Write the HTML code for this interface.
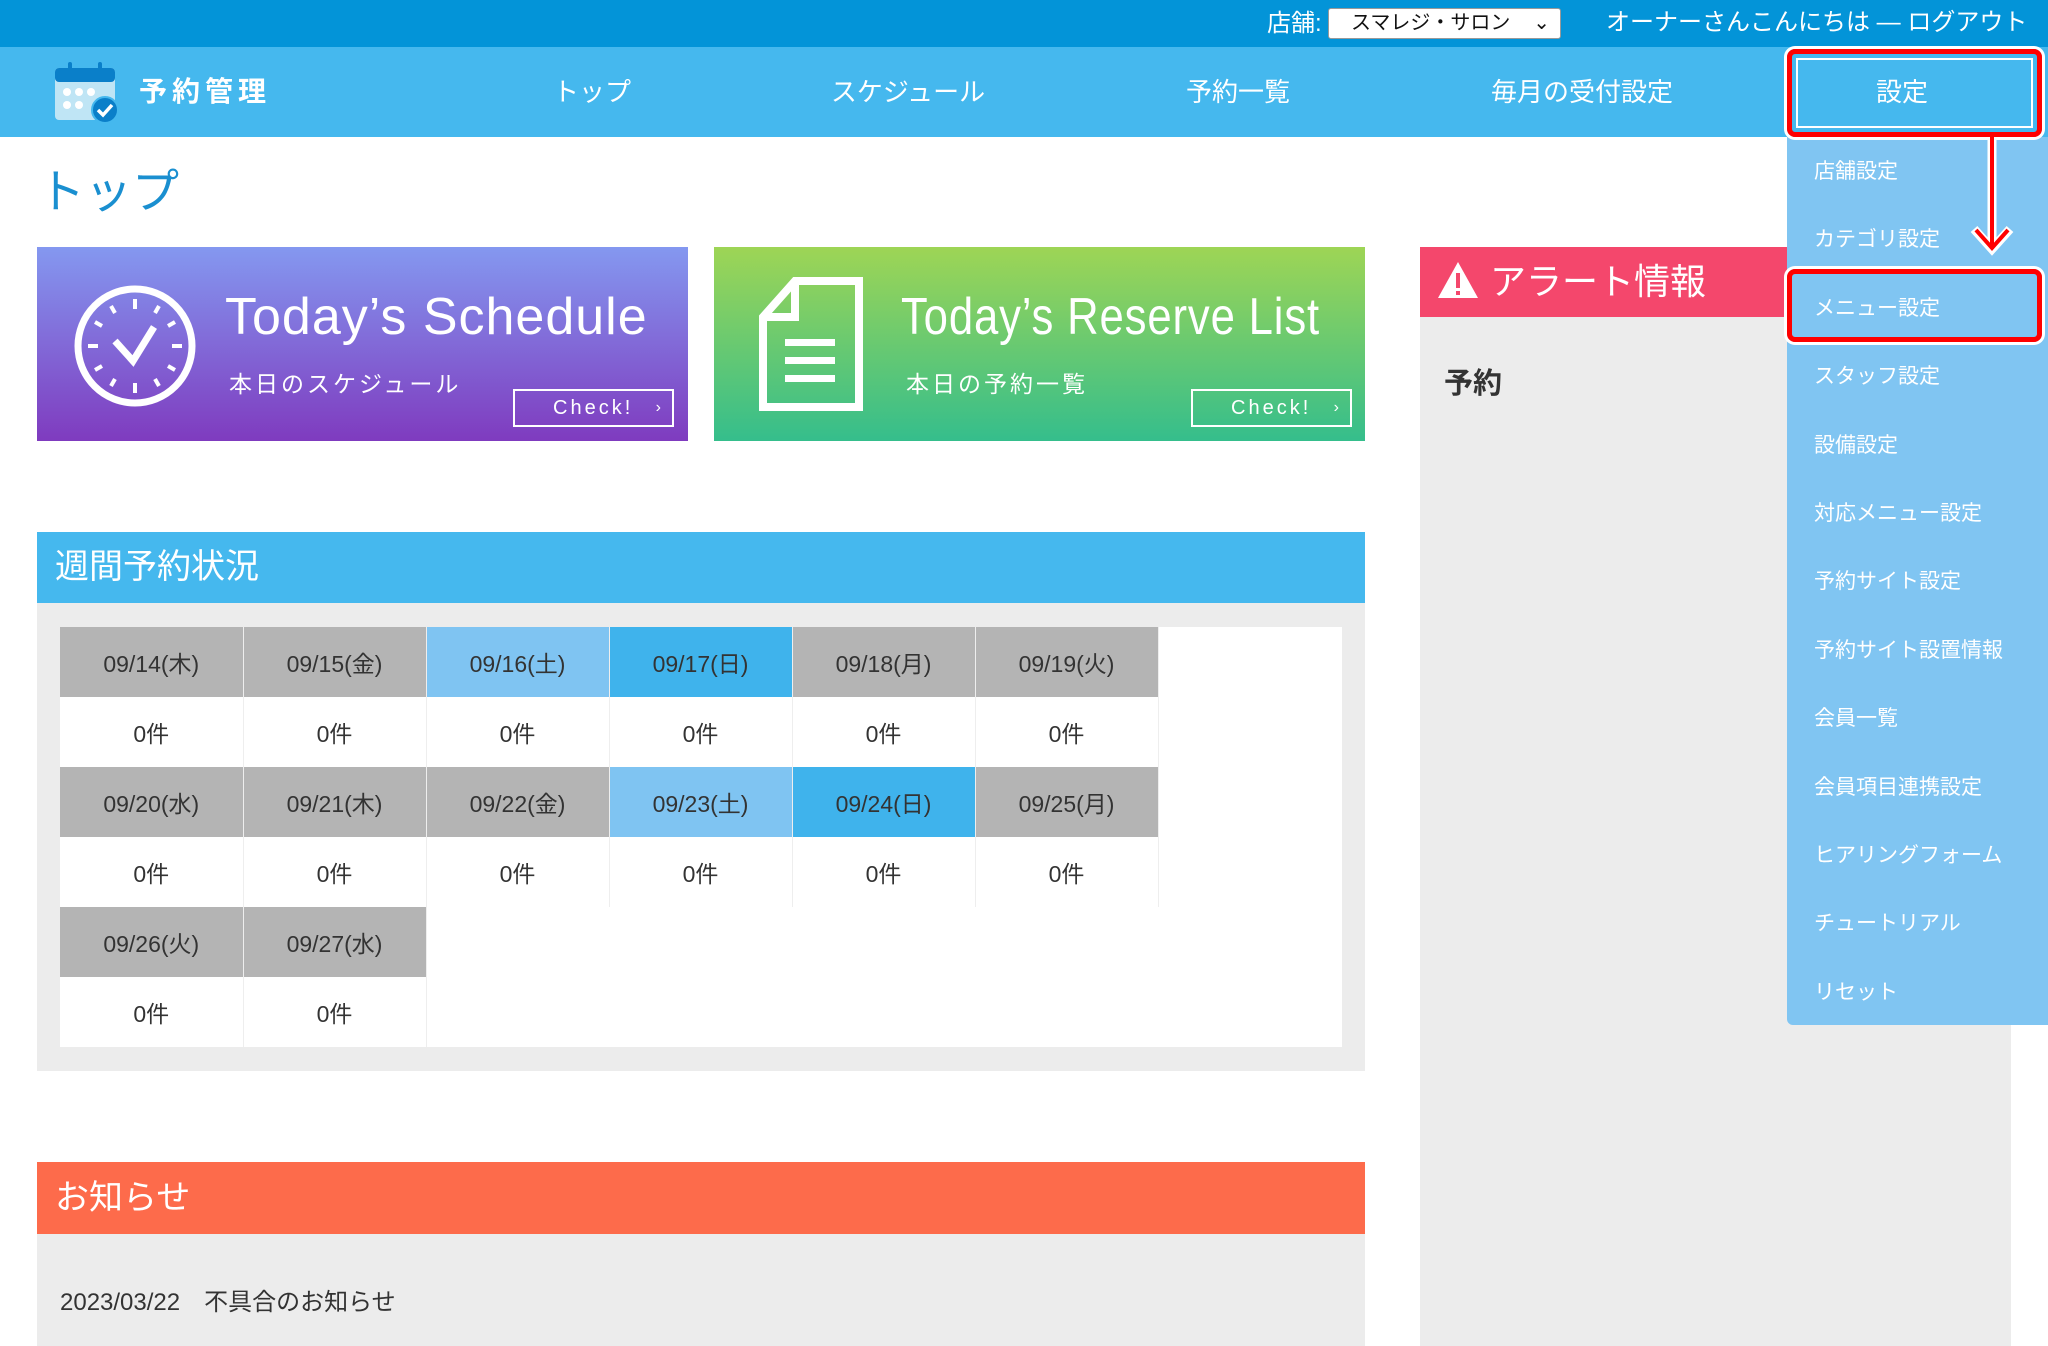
<!DOCTYPE html>
<html><head><meta charset="utf-8"><style>
*{margin:0;padding:0;box-sizing:border-box}
body{width:2048px;height:1346px;overflow:hidden;background:#fff;font-family:"Liberation Sans","Noto Sans CJK JP",sans-serif;position:relative;color:#333}
.abs{position:absolute}
#top{left:0;top:0;width:2048px;height:47px;background:#0394d8}
#nav{left:0;top:47px;width:2048px;height:90px;background:#45b8ee}
.nv{position:absolute;top:47px;height:90px;line-height:90px;color:#fff;font-size:26px;transform:translateX(-50%);white-space:nowrap;z-index:12}
.dd{left:1787px;top:137px;width:261px;height:888px;background:#80c5f2;border-radius:0 0 0 6px;z-index:10}
.di{position:absolute;left:1814px;color:#fff;font-size:21px;white-space:nowrap;transform:translateY(-50%);z-index:11}
.z{z-index:11}
.card{top:247px;width:651px;height:194px;color:#fff;overflow:hidden}
.ttl{position:absolute;font-size:52px;letter-spacing:1px;font-family:"Liberation Sans",sans-serif;white-space:nowrap;transform-origin:left center}
.sub{position:absolute;font-size:23px;letter-spacing:3px;white-space:nowrap}
.chk{position:absolute;width:161px;height:38px;border:2px solid #fff;font-size:20px;letter-spacing:3px;line-height:34px;padding-left:38px}
.chk span{position:absolute;right:8px;font-size:16px}
table{border-collapse:collapse;position:absolute;left:60px;top:627px}
td{width:183px;height:70px;text-align:center;font-size:23px;color:#333;border-right:1px solid #eee}
.h{background:#b4b4b4}.s{background:#7fc4f2}.u{background:#3fb3ec}
</style></head><body>
<div id="top" class="abs"></div>
<div class="abs" style="left:1267px;top:8px;color:#fff;font-size:24px;line-height:31px">店舗:</div>
<div class="abs" style="left:1328px;top:8px;width:233px;height:31px;background:#fff;border:1px solid #999;border-radius:3px;font-size:20px;line-height:29px;padding-left:22px;color:#111">スマレジ・サロン<span style="position:absolute;right:10px;top:0">⌄</span></div>
<div class="abs" style="left:1606px;top:6px;color:#fff;font-size:24px;line-height:33px;white-space:nowrap">オーナーさんこんにちは — ログアウト</div>
<div id="nav" class="abs"></div>
<svg class="abs" style="left:53px;top:60px" width="70" height="64" viewBox="0 0 70 64">
<rect x="2" y="8" width="60" height="52" rx="4" fill="#bfe5f5"/><rect x="2" y="8" width="60" height="14" rx="4" fill="#0a7fc9"/>
<rect x="15" y="2" width="4" height="10" rx="2" fill="#0a7fc9"/><rect x="45" y="2" width="4" height="10" rx="2" fill="#0a7fc9"/>
<circle cx="14" cy="32" r="4" fill="#fff"/><circle cx="26" cy="32" r="4" fill="#fff"/><circle cx="38" cy="32" r="4" fill="#fff"/><circle cx="14" cy="45" r="4" fill="#fff"/><circle cx="26" cy="45" r="4" fill="#fff"/>
<circle cx="52" cy="50" r="13" fill="#0a7fc9" stroke="#45b8ee" stroke-width="2"/><path d="M45 50l5 5 9-10" stroke="#fff" stroke-width="3.5" fill="none"/></svg>
<div class="abs" style="left:139px;top:47px;line-height:90px;color:#fff;font-size:28px;font-weight:bold;letter-spacing:5px">予約管理</div>
<div class="nv" style="left:592px">トップ</div>
<div class="nv" style="left:908px">スケジュール</div>
<div class="nv" style="left:1238px">予約一覧</div>
<div class="nv" style="left:1582px">毎月の受付設定</div>

<div class="abs" style="left:38px;top:162px;font-size:47px;color:#1a8fd0;line-height:60px">トップ</div>

<div class="abs card" style="left:37px;background:linear-gradient(#8498f0,#7f3bbf)">
<svg class="abs" style="left:35px;top:36px" width="126" height="126" viewBox="0 0 126 126"><circle cx="63" cy="63" r="57" fill="none" stroke="#fff" stroke-width="7"/>
<g stroke="#fff" stroke-width="4"><path d="M63 16v10M63 100v10M16 63h10M100 63h10M39 23l4 7M87 23l-4 7M23 39l7 4M103 39l-7 4M23 87l7-4M103 87l-7-4M39 103l4-7M87 103l-4-7"/></g>
<path d="M43 58l18 20 21-34" stroke="#fff" stroke-width="7" fill="none"/></svg>
<div class="ttl" style="left:188px;top:40px">Today’s Schedule</div>
<div class="sub" style="left:192px;top:118px">本日のスケジュール</div>
<div class="chk" style="left:476px;top:142px">Check!<span>›</span></div>
</div>
<div class="abs card" style="left:714px;background:linear-gradient(#9ed555,#35be8c)">
<svg class="abs" style="left:45px;top:30px" width="104" height="134" viewBox="0 0 104 134"><path d="M36 4H100V130H4V40Z" fill="none" stroke="#fff" stroke-width="8"/><path d="M36 4V40H4" fill="none" stroke="#fff" stroke-width="8"/>
<rect x="26" y="62" width="50" height="7" fill="#fff"/><rect x="26" y="80" width="50" height="7" fill="#fff"/><rect x="26" y="98" width="50" height="7" fill="#fff"/></svg>
<div class="ttl" style="left:187px;top:40px;transform:scaleX(0.84)">Today’s Reserve List</div>
<div class="sub" style="left:192px;top:118px">本日の予約一覧</div>
<div class="chk" style="left:477px;top:142px">Check!<span>›</span></div>
</div>

<div class="abs" style="left:1420px;top:247px;width:591px;height:1099px;background:#ececec"></div>
<div class="abs" style="left:1420px;top:247px;width:591px;height:70px;background:#f4476c"></div>
<svg class="abs" style="left:1436px;top:260px" width="44" height="40"><path d="M22 2L42 38H2Z" fill="#fff"/><rect x="20" y="13" width="4" height="15" fill="#f4476c"/><rect x="20" y="31" width="4" height="4" fill="#f4476c"/></svg>
<div class="abs" style="left:1490px;top:247px;line-height:70px;color:#fff;font-size:36px">アラート情報</div>
<div class="abs" style="left:1444px;top:360px;font-size:29px;font-weight:bold;color:#333">予約</div>

<div class="abs dd"></div>
<div class="abs z" style="left:1787px;top:49px;width:255px;height:88px;border:5px solid #f00;border-radius:8px;box-shadow:0 0 0 3px #fff"></div>
<div class="abs z" style="left:1796px;top:58px;width:237px;height:70px;border:2px solid #fff;background:#45b8ee"></div>
<div class="nv" style="left:1902px">設定</div>
<div class="di" style="top:170px">店舗設定</div>
<div class="di" style="top:238px">カテゴリ設定</div>
<div class="di" style="top:307px">メニュー設定</div>
<div class="di" style="top:375px">スタッフ設定</div>
<div class="di" style="top:444px">設備設定</div>
<div class="di" style="top:512px">対応メニュー設定</div>
<div class="di" style="top:580px">予約サイト設定</div>
<div class="di" style="top:649px">予約サイト設置情報</div>
<div class="di" style="top:717px">会員一覧</div>
<div class="di" style="top:786px">会員項目連携設定</div>
<div class="di" style="top:854px">ヒアリングフォーム</div>
<div class="di" style="top:922px">チュートリアル</div>
<div class="di" style="top:991px">リセット</div>
<div class="abs z" style="left:1787px;top:269px;width:255px;height:73px;border:5px solid #f00;border-radius:8px;box-shadow:0 0 0 3px #fff"></div>
<svg class="abs z" style="left:1970px;top:137px" width="46" height="120"><path d="M22 2V112" stroke="#fff" stroke-width="9"/><path d="M4 92L22 112 40 92" stroke="#fff" stroke-width="9" fill="none"/><path d="M22 0V112" stroke="#f00" stroke-width="4"/><path d="M6 93L22 111 38 93" stroke="#f00" stroke-width="4" fill="none"/></svg>

<div class="abs" style="left:37px;top:532px;width:1328px;height:539px;background:#ececec"></div>
<div class="abs" style="left:37px;top:532px;width:1328px;height:71px;background:#45b8ee;color:#fff;font-size:34px;line-height:71px;padding-left:18px">週間予約状況</div>
<div class="abs" style="left:60px;top:627px;width:1282px;height:420px;background:#fff"></div>
<table>
<tr><td class="h">09/14(木)</td><td class="h">09/15(金)</td><td class="s">09/16(土)</td><td class="u">09/17(日)</td><td class="h">09/18(月)</td><td class="h">09/19(火)</td></tr>
<tr><td>0件</td><td>0件</td><td>0件</td><td>0件</td><td>0件</td><td>0件</td></tr>
<tr><td class="h">09/20(水)</td><td class="h">09/21(木)</td><td class="h">09/22(金)</td><td class="s">09/23(土)</td><td class="u">09/24(日)</td><td class="h">09/25(月)</td></tr>
<tr><td>0件</td><td>0件</td><td>0件</td><td>0件</td><td>0件</td><td>0件</td></tr>
<tr><td class="h">09/26(火)</td><td class="h">09/27(水)</td></tr>
<tr><td>0件</td><td>0件</td></tr>
</table>

<div class="abs" style="left:37px;top:1162px;width:1328px;height:184px;background:#ececec"></div>
<div class="abs" style="left:37px;top:1162px;width:1328px;height:72px;background:#fd6b4b;color:#fff;font-size:34px;line-height:72px;padding-left:18px">お知らせ</div>
<div class="abs" style="left:60px;top:1282px;font-size:24px;color:#333;white-space:nowrap">2023/03/22　不具合のお知らせ</div>
</body></html>
